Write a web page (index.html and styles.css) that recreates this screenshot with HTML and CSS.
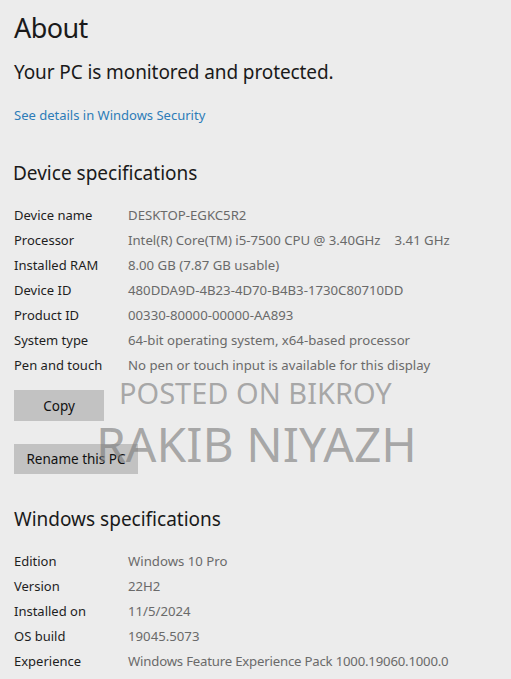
FILE: index.html
```html
<!DOCTYPE html>
<html>
<head>
<meta charset="utf-8">
<link rel="stylesheet" href="styles.css">
</head>
<body>
<main class="page">
  <h1 class="title">About</h1>
  <p class="status">Your PC is monitored and protected.</p>
  <a class="link">See details in Windows Security</a>

  <h2 class="section">Device specifications</h2>
  <dl class="specs">
    <div class="row"><dt>Device name</dt><dd>DESKTOP-EGKC5R2</dd></div>
    <div class="row"><dt>Processor</dt><dd>Intel(R) Core(TM) i5-7500 CPU @ 3.40GHz<span class="ghz">3.41 GHz</span></dd></div>
    <div class="row"><dt>Installed RAM</dt><dd>8.00 GB (7.87 GB usable)</dd></div>
    <div class="row"><dt>Device ID</dt><dd>480DDA9D-4B23-4D70-B4B3-1730C80710DD</dd></div>
    <div class="row"><dt>Product ID</dt><dd>00330-80000-00000-AA893</dd></div>
    <div class="row"><dt>System type</dt><dd>64-bit operating system, x64-based processor</dd></div>
    <div class="row"><dt>Pen and touch</dt><dd>No pen or touch input is available for this display</dd></div>
  </dl>

  <div class="actions">
    <button class="btn btn-copy">Copy</button>
    <button class="btn btn-rename">Rename this PC</button>
    <div class="wm wm1">POSTED ON BIKROY</div>
    <div class="wm wm2">RAKIB NIYAZH</div>
  </div>

  <h2 class="section section2">Windows specifications</h2>
  <dl class="specs specs2">
    <div class="row"><dt>Edition</dt><dd>Windows 10 Pro</dd></div>
    <div class="row"><dt>Version</dt><dd>22H2</dd></div>
    <div class="row"><dt>Installed on</dt><dd>11/5/2024</dd></div>
    <div class="row"><dt>OS build</dt><dd>19045.5073</dd></div>
    <div class="row"><dt>Experience</dt><dd class="narrow">Windows Feature Experience Pack 1000.19060.1000.0</dd></div>
  </dl>
</main>
</body>
</html>
```

FILE: styles.css
```css
html, body {
  margin: 0;
  padding: 0;
  background: #ececec;
}
body {
  font-family: "Noto Sans", "Open Sans", sans-serif;
  color: #1a1a1a;
  width: 511px;
  height: 679px;
  overflow: hidden;
}
.page {
  padding: 8px 0 0 14px;
}
.title {
  margin: 0;
  font-size: 27px;
  font-weight: 400;
  line-height: 40px;
  letter-spacing: -0.6px;
}
.status {
  margin: 12px 0 0;
  font-size: 19px;
  line-height: 24px;
  letter-spacing: -0.1px;
}
.link {
  display: block;
  margin-top: 22px;
  font-size: 13px;
  line-height: 18px;
  color: #2d7cb8;
}
.section {
  margin: 35px 0 0 -1px;
  font-size: 19px;
  font-weight: 400;
  line-height: 28px;
}
.section2 {
  margin-top: 31px;
  margin-left: 0;
}
.specs {
  margin: 15px 0 0;
}
.specs2 {
  margin-top: 15px;
}
.row {
  display: flex;
  height: 25px;
  align-items: center;
  font-size: 13px;
}
.row dt {
  width: 114px;
  color: #1e1e1e;
}
.row dd {
  margin: 0;
  font-size: 13.2px;
  color: #6a6a6a;
  white-space: nowrap;
}
.row dd.narrow {
  letter-spacing: -0.2px;
}
.ghz {
  margin-left: 14px;
}
.actions {
  position: relative;
  display: flex;
  flex-direction: column;
  align-items: flex-start;
  gap: 23px;
  margin-top: 13px;
}
.btn {
  border: none;
  background: #c2c2c2;
  font-family: inherit;
  font-size: 13.5px;
  color: #111;
  height: 31px;
  padding: 0;
}
.btn-copy { width: 90px; }
.btn-rename { width: 124px; height: 30px; }
.wm {
  position: absolute;
  color: rgba(120, 120, 120, 0.6);
  white-space: nowrap;
  font-weight: 400;
  line-height: 1;
  pointer-events: none;
}
.wm1 {
  left: 105px;
  top: -12px;
  font-size: 29px;
}
.wm2 {
  left: 82px;
  top: 30px;
  font-size: 48px;
}
```
